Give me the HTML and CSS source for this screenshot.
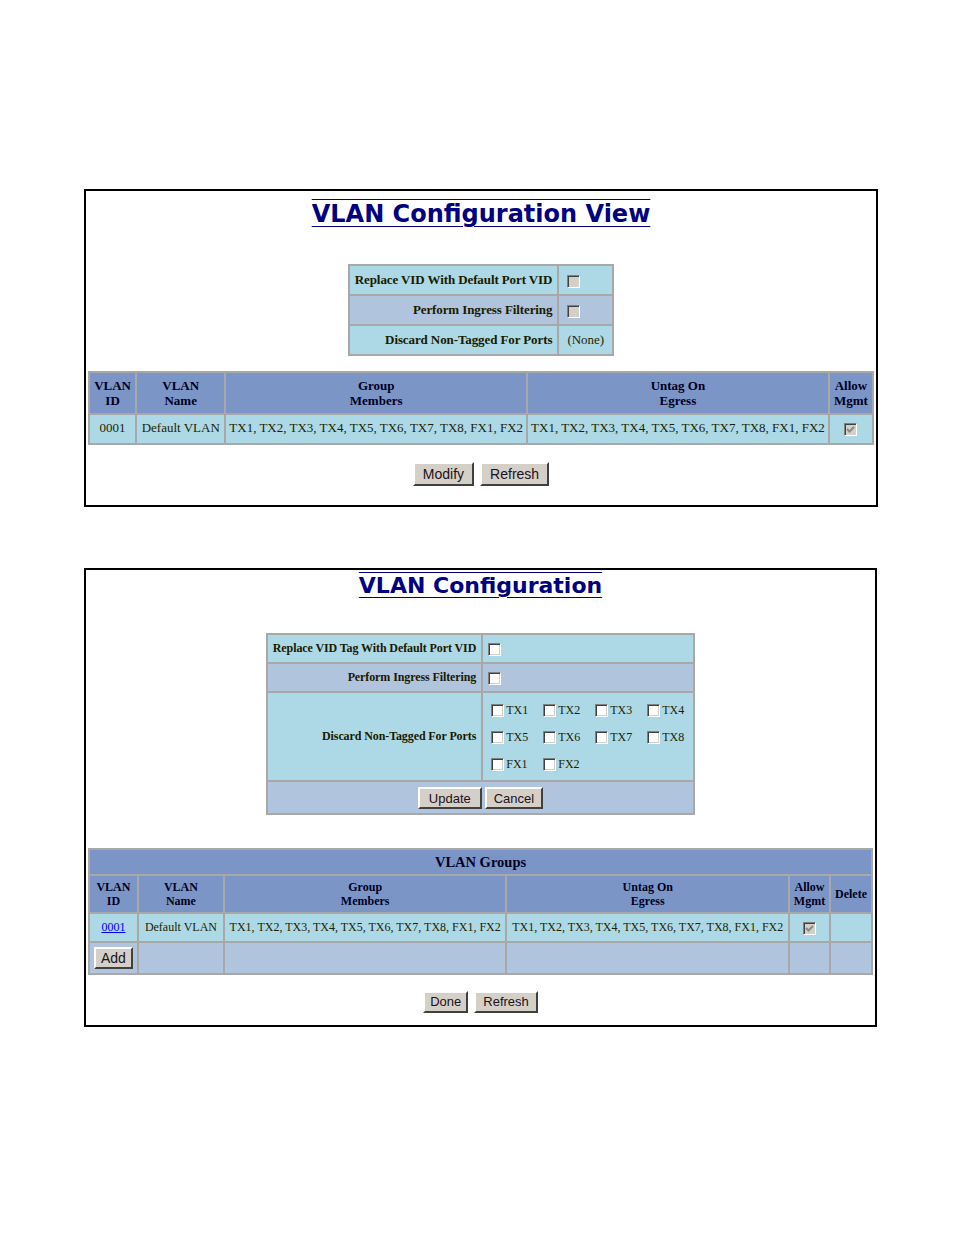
FILE: index.html
```html
<!DOCTYPE html>
<html lang="en">
<head>
    <meta charset="UTF-8">
    <title>VLAN Configuration</title>
    <link rel="stylesheet" href="styles.css">
</head>
<body>
<div class="page">

    <!-- VLAN view -->
    <div class="panel view">
        <h1 class="title">VLAN Configuration View</h1>

        <table class="opts">
            <tr class="lb"><th>Replace VID With Default Port VID</th><td><span class="cb off"></span></td></tr>
            <tr class="sb"><th>Perform Ingress Filtering</th><td><span class="cb off"></span></td></tr>
            <tr class="lb"><th>Discard Non-Tagged For Ports</th><td>(None)</td></tr>
        </table>

        <table class="grid">
            <tr class="head">
                <th class="c-id">VLAN<br>ID</th>
                <th class="c-name">VLAN<br>Name</th>
                <th class="c-group">Group<br>Members</th>
                <th class="c-group">Untag On<br>Egress</th>
                <th class="c-mgmt">Allow<br>Mgmt</th>
            </tr>
            <tr class="lb">
                <td>0001</td>
                <td>Default VLAN</td>
                <td>TX1, TX2, TX3, TX4, TX5, TX6, TX7, TX8, FX1, FX2</td>
                <td>TX1, TX2, TX3, TX4, TX5, TX6, TX7, TX8, FX1, FX2</td>
                <td><span class="cb off"><svg width="11" height="11" viewBox="0 0 11 11"><polyline points="2,5 4.5,7.5 9,3" fill="none" stroke="#8a8a8a" stroke-width="2"/></svg></span></td>
            </tr>
        </table>

        <div class="actions">
            <button class="btn">Modify</button>
            <button class="btn">Refresh</button>
        </div>
    </div>

    <!-- VLAN edit -->
    <div class="panel edit">
        <h1 class="title">VLAN Configuration</h1>

        <table class="opts">
            <tr class="lb"><th>Replace VID Tag With Default Port VID</th><td><span class="cb"></span></td></tr>
            <tr class="sb"><th>Perform Ingress Filtering</th><td><span class="cb"></span></td></tr>
            <tr class="lb">
                <th>Discard Non-Tagged For Ports</th>
                <td class="port-cell">
                    <div class="ports">
                        <label class="port"><span class="cb"></span>TX1</label>
                        <label class="port"><span class="cb"></span>TX2</label>
                        <label class="port"><span class="cb"></span>TX3</label>
                        <label class="port"><span class="cb"></span>TX4</label>
                        <label class="port"><span class="cb"></span>TX5</label>
                        <label class="port"><span class="cb"></span>TX6</label>
                        <label class="port"><span class="cb"></span>TX7</label>
                        <label class="port"><span class="cb"></span>TX8</label>
                        <label class="port"><span class="cb"></span>FX1</label>
                        <label class="port"><span class="cb"></span>FX2</label>
                    </div>
                </td>
            </tr>
            <tr class="sb">
                <td colspan="2" class="row-btns">
                    <div class="btn-pair">
                        <button class="btn wide">Update</button>
                        <button class="btn">Cancel</button>
                    </div>
                </td>
            </tr>
        </table>

        <table class="grid groups">
            <tr class="cap"><th colspan="6">VLAN Groups</th></tr>
            <tr class="head">
                <th class="c-id">VLAN<br>ID</th>
                <th class="c-name">VLAN<br>Name</th>
                <th class="c-group">Group<br>Members</th>
                <th class="c-group">Untag On<br>Egress</th>
                <th class="c-mgmt">Allow<br>Mgmt</th>
                <th class="c-del">Delete</th>
            </tr>
            <tr class="lb">
                <td><a href="#">0001</a></td>
                <td>Default VLAN</td>
                <td>TX1, TX2, TX3, TX4, TX5, TX6, TX7, TX8, FX1, FX2</td>
                <td>TX1, TX2, TX3, TX4, TX5, TX6, TX7, TX8, FX1, FX2</td>
                <td><span class="cb off"><svg width="11" height="11" viewBox="0 0 11 11"><polyline points="2,5 4.5,7.5 9,3" fill="none" stroke="#8a8a8a" stroke-width="2"/></svg></span></td>
                <td></td>
            </tr>
            <tr class="sb add-row">
                <td><button class="btn add">Add</button></td>
                <td></td><td></td><td></td><td></td><td></td>
            </tr>
        </table>

        <div class="actions">
            <button class="btn narrow">Done</button>
            <button class="btn">Refresh</button>
        </div>
    </div>

</div>
</body>
</html>
```

FILE: styles.css
```css
/* page */
body {
    margin: 0;
    background: #fff;
    color: #1f1f00;
    font-family: "Liberation Serif", "Times New Roman", serif;
}
.page {
    padding: 189px 0 0 84px;
}

/* panels */
.panel {
    width: 794px;
    box-sizing: border-box;
    border: 2px solid #000;
    padding: 0 2px;
    text-align: center;
}
.view {
    font-size: 13px;
    padding-bottom: 19px;
}
.edit {
    width: 793px;
    margin-top: 61px;
    font-size: 12px;
    padding-bottom: 12px;
}
.title {
    margin: 9px 0 36px;
    font-family: "DejaVu Sans", Verdana, sans-serif;
    font-size: 24px;
    line-height: 28px;
    font-weight: bold;
    color: #000080;
    text-decoration: underline overline;
    text-decoration-thickness: 1px;
    text-underline-offset: 4px;
}
.edit .title {
    margin: 3px 0 34px;
    font-size: 22px;
    line-height: 26px;
}

/* tables */
table {
    border-collapse: collapse;
    border: 2px solid;
    border-color: #c8c8c8 #8a8a8a #8a8a8a #c8c8c8;
}
th, td {
    border: 2px solid #a8a8a8;
}
.lb { background: #add8e6; }
.sb { background: #b0c4de; }

.opts {
    margin: 0 auto;
}
.opts th {
    padding: 6px 5px;
    text-align: right;
    color: #1a1a00;
    letter-spacing: -0.1px;
}
.opts td {
    padding: 6px 8px;
    text-align: left;
}
.edit .opts td { padding: 6px 5px; }
.edit .opts td.port-cell { padding: 4px 8px 2px 5px; }
.opts td.row-btns {
    padding: 5px 4px 4px;
}

.ports {
    display: grid;
    grid-template-columns: repeat(4, 38px);
    grid-auto-rows: 27px;
    column-gap: 14px;
    padding: 0 0 0 3px;
}
.port {
    display: flex;
    align-items: center;
    gap: 2px;
}

.grid {
    width: 100%;
    margin-top: 15px;
}
.grid .head th {
    padding: 5px 4px;
    line-height: 15px;
    background: #7b96c6;
    color: #00001f;
}
.grid td {
    padding: 5px 3px 7px;
    white-space: nowrap;
}
.c-id { width: 38px; }
.c-name { width: 88px; }
.c-mgmt { width: 35px; }
.c-del { width: 34px; }

.groups {
    margin-top: 33px;
}
.groups .cap th {
    padding: 4px;
    font-size: 14.5px;
    line-height: 16px;
    background: #7b96c6;
    color: #00001f;
}
.groups .head th {
    padding: 4px 3px;
    line-height: 14px;
}
.groups .c-name { width: 78px; }
.groups .c-mgmt { width: 33px; }
.groups td {
    padding: 6px 3px;
    line-height: 14px;
}
.groups .add-row td {
    padding: 4px;
    text-align: left;
}
.groups a {
    color: #0000ff;
}

/* checkboxes */
.cb {
    display: inline-flex;
    align-items: center;
    justify-content: center;
    width: 13px;
    height: 13px;
    box-sizing: border-box;
    border: 1px solid;
    border-color: #808080 #fff #fff #808080;
    box-shadow: inset 1px 1px #404040, inset -1px -1px #d4d0c8;
    background: #fff;
    vertical-align: middle;
}
.cb.off {
    background: #d4d0c8;
}

/* buttons */
.actions {
    display: flex;
    justify-content: center;
    gap: 6px;
    margin-top: 17px;
}
.edit .actions {
    margin-top: 16px;
}
.btn-pair {
    display: flex;
    justify-content: center;
    gap: 3px;
}
.btn {
    height: 24px;
    padding: 0 8px;
    border: 2px solid;
    border-color: #fff #404040 #404040 #fff;
    background: #d4d0c8;
    color: #201020;
    font-family: "Liberation Sans", Arial, sans-serif;
    font-size: 14px;
}
.edit .btn {
    height: 22px;
    font-size: 13px;
    padding: 0 7px;
}
.edit .btn.wide { padding: 0 9px; }
.edit .btn.narrow { padding: 0 5px; }
.edit .btn.add {
    height: 22px;
    font-size: 14px;
    padding: 0 5px;
}
```
